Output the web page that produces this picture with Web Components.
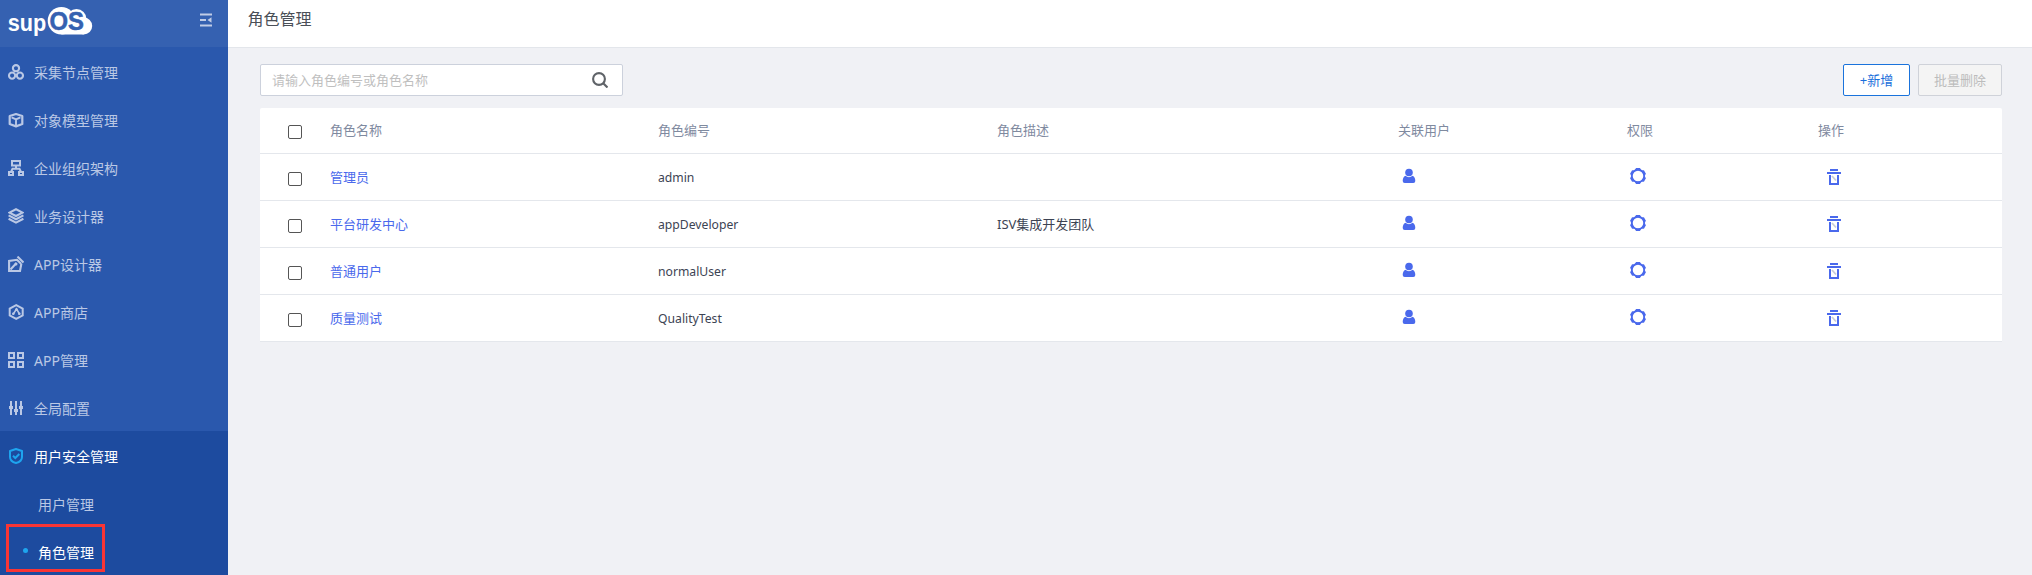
<!DOCTYPE html>
<html lang="zh-CN">
<head>
<meta charset="utf-8">
<title>supOS - 角色管理</title>
<style>
  html, body { margin: 0; height: 100%; overflow: hidden; }
  body { font-family: "Noto Sans", "Noto Sans CJK SC", sans-serif; font-weight: 400; background: #f0f1f5; }
</style>
</head>
<body>
<role-app></role-app>
<script>
const define = (name, html) => customElements.define(name, class extends HTMLElement {
  constructor() {
    super();
    this.attachShadow({ mode: 'open' });
  }
  connectedCallback() {
    if (this.shadowRoot.childNodes.length) return;
    const t = document.createElement('template');
    t.innerHTML = typeof html === 'function' ? html(this) : html;
    this.shadowRoot.append(t.content.cloneNode(true));
  }
});

const ICONS = {
  nodes: '<g fill="none" stroke="currentColor" stroke-width="2.100"><circle cx="8" cy="4.200" r="3.100"/><circle cx="4.100" cy="11.600" r="3.100"/><circle cx="11.900" cy="11.600" r="3.100"/></g>',
  cube: '<g fill="none" stroke="currentColor" stroke-width="2.200" stroke-linejoin="round"><path d="M8 2 14.300 4v8L8 14.400 1.700 12V4z"/><path d="M3.600 5.400 8 7.400l4.400-2M8 7.400v6" stroke-width="1.900"/></g>',
  org: '<g fill="none" stroke="currentColor" stroke-width="2"><path d="M4 1h8v4.500H4zM1 12h4v3H1zM11 12h4v3h-4zM8 6v2.500M3 12l1.500-3.200h7L13 12"/></g>',
  layers: '<g fill="none" stroke="currentColor" stroke-width="2.100"><path d="M8 1.200 14.600 4.600 8 8 1.400 4.600z"/><path d="M.6 7.400 8 11.200l7.400-3.800M.6 10.800 8 14.600l7.400-3.800"/></g>',
  design: '<g fill="none" stroke="currentColor" stroke-width="2.100"><path d="M13.400 7.500 12 15H1.100V5L9 3.800l4 4"/><path d="m9.500.6 6 6"/><path d="M2.500 13.500 8.500 7"/></g><circle cx="8" cy="8" r="1.500" fill="currentColor"/>',
  store: '<g fill="none" stroke="currentColor" stroke-width="2"><path d="M8.200 1.200 14.700 4.600v6.800L8.200 14.800 1.700 11.400V4.600z"/><path d="M5 10.500 7.200 7l1.400-2 3.200 5.500" stroke-width="1.500"/></g><g fill="currentColor"><circle cx="8.400" cy="5.600" r="1.300"/><circle cx="5.300" cy="9.800" r="1.300"/><circle cx="11.300" cy="9.800" r="1.300"/></g>',
  grid: '<path d="M1 1h5v5H1zM10 1h5v5h-5zM1 10h5v5H1zM10 10h5v5h-5z" fill="none" stroke="currentColor" stroke-width="2"/>',
  sliders: '<path d="M3 1v14M8 1v14M13 1v14" stroke="currentColor" stroke-width="2"/><path d="M1 6h4v3H1zM6 9h4v3H6zM11 6h4v3h-4z" fill="currentColor"/>',
  shield: '<path d="M8 1 14 3v6q0 4.500-6 6-6-1.500-6-6V3z" fill="none" stroke="currentColor" stroke-width="2" stroke-linejoin="round"/><path d="m5 7.800 2.300 2.200 4-4" fill="none" stroke="currentColor" stroke-width="2"/>',
  fold: '<path d="M1 1.500h12M1 7h6M1 12.500h12" stroke="currentColor" stroke-width="2"/><path d="M12.500 4.200v5.600L8.500 7z" fill="currentColor"/>',
  search: '<circle cx="7" cy="7" r="5.900" fill="none" stroke="currentColor" stroke-width="2.100"/><path d="m11 11 4.500 4.500" stroke="currentColor" stroke-width="2.200"/>',
  user: '<circle cx="8" cy="4.500" r="3.800" fill="currentColor"/><path d="M4.400 7.800Q8 10.600 11.600 7.800 14.300 9 14.300 13q0 2-2 2H3.700q-2 0-2-2 0-4 2.700-5.200z" fill="currentColor"/>',
  gear: '<circle cx="8" cy="8" r="6.200" fill="none" stroke="currentColor" stroke-width="1.900"/><g fill="currentColor"><path d="M6 0h4l1.200 2.300H4.800zM6 16h4l1.200-2.300H4.800z"/><path d="M6 0h4l1.200 2.300H4.800zM6 16h4l1.200-2.300H4.800z" transform="rotate(60 8 8)"/><path d="M6 0h4l1.200 2.300H4.800zM6 16h4l1.200-2.300H4.800z" transform="rotate(120 8 8)"/></g>',
  trash: '<path d="M4 1h8M1 4h14" stroke="currentColor" stroke-width="2"/><path d="M4 6v9h8V6" fill="none" stroke="currentColor" stroke-width="2"/><path d="m6 7 4 4.500" stroke="#c9cdd8" stroke-width="1.800"/>'
};

define('ui-icon', el => `<style>:host{display:block;width:16px;height:16px;flex:none}svg{display:block;width:100%;height:100%}</style>
  <svg viewBox="${el.getAttribute('box') || '0 0 16 16'}">${ICONS[el.getAttribute('name')]}</svg>`);

define('brand-logo', `<style>:host{display:block;width:86px;height:36px}svg{display:block}</style>
  <svg width="86" height="36" viewBox="0 0 86 36" font-family="Liberation Sans" font-weight="700">
    <g fill="#fff"><circle cx="53.400" cy="13.700" r="13.700"/><circle cx="68.500" cy="12" r="10"/><circle cx="75.700" cy="19" r="8.500"/><path d="M53.400 14h22.300v13.500H53.400z"/></g>
    <text x="-0.300" y="24" font-size="23" fill="#fff" textLength="38.500" lengthAdjust="spacingAndGlyphs">sup</text>
    <text x="41.500" y="22.800" font-size="25" fill="#3561b1" stroke="#3561b1" stroke-width=".5" textLength="34.500" lengthAdjust="spacingAndGlyphs">OS</text>
  </svg>`);

define('nav-item', `<style>
  :host{display:flex;align-items:center;height:48px;box-sizing:border-box;padding:4px 0 0 8px;gap:10px;font-size:14px;color:#bac8e5}
  :host([active]){color:#fff}
  :host([sub]){padding-left:38px}
  :host([current]){padding-left:23px}
  .dot{display:none;width:5px;height:5px;border-radius:50%;background:#1ea5ef;margin-top:-5px}
  :host([current]) .dot{display:block}
  ::slotted(ui-icon){margin-top:-2px}
  .label{line-height:20px;white-space:nowrap}
  </style><slot name="icon"></slot><i class="dot"></i><span class="label"><slot></slot></span>`);

define('side-nav', `<style>
  :host{display:flex;flex-direction:column;width:228px;flex:none;background:#2a58ad;position:relative}
  header{height:47px;background:#3561b1;display:flex;align-items:flex-start;justify-content:space-between;box-sizing:border-box;padding:7px 15px 0 8px}
  header ui-icon{color:#c0cce6;width:14px;height:14px;margin-top:6px}
  .open{background:#1d4b9f;flex:1}
  .open ui-icon{color:#1ea5ef}
  .mark{position:absolute;left:6px;top:524px;width:99px;height:48px;box-sizing:border-box;border:3px solid #f93535}
  </style>
  <header><brand-logo></brand-logo><ui-icon name="fold" box="0 0 14 14"></ui-icon></header>
  <nav>${[['nodes','采集节点管理'],['cube','对象模型管理'],['org','企业组织架构'],['layers','业务设计器'],['design','APP设计器'],['store','APP商店'],['grid','APP管理'],['sliders','全局配置']].map(([i,t]) => `<nav-item><ui-icon slot="icon" name="${i}"></ui-icon>${t}</nav-item>`).join('')}</nav>
  <nav class="open"><nav-item active><ui-icon slot="icon" name="shield"></ui-icon>用户安全管理</nav-item><nav-item sub>用户管理</nav-item><nav-item sub active current>角色管理</nav-item></nav>
  <div class="mark"></div>`);

define('page-header', `<style>:host{display:flex;height:48px;box-sizing:border-box;border-bottom:1px solid #e3e6eb;background:#fff;padding:7px 20px 0 19.500px;font-size:16px;line-height:24px;color:#4a4f57}</style><slot></slot>`);

define('search-box', `<style>
  :host{display:flex;align-items:center;justify-content:space-between;width:363px;height:32px;box-sizing:border-box;border:1px solid #ccd1dc;border-radius:2px;background:#fff;padding:0 14px 0 11px;font-size:13px;color:#bfbfbf}
  ui-icon{color:#5f6368;margin-top:-1px}
  span{line-height:20px}</style><span><slot></slot></span><ui-icon name="search"></ui-icon>`);

define('ui-button', `<style>
  :host{display:flex;align-items:center;justify-content:center;height:32px;box-sizing:border-box;border:1px solid #1a73dc;border-radius:2px;background:#fff;color:#1a6fdb;font-size:13px;line-height:20px;width:67px}
  :host([disabled]){width:84px;border-color:#cfd2d9;background:#f4f4f4;color:#bcbcbc}</style><slot></slot>`);

define('check-box', `<style>:host{display:block;width:14px;height:14px;box-sizing:border-box;border:1px solid #555;border-radius:2px;background:#fff}</style>`);

define('table-row', `<style>
  :host{display:grid;grid-template-columns:70px 328px 339px 401px 229px 191px 1fr;align-items:center;height:47px;box-sizing:border-box;border-bottom:1px solid #e4e7ec;font-size:13px;line-height:20px;color:#3c4353}
  :host([head]){height:46px;color:#7f8a9f}
  check-box{margin:3px 0 0 28px}
  .t,.h{padding-bottom:1px}
  .code{font-size:12.200px;padding:1px 0 0}
  :host([head]) .code{font-size:13px;padding:0 0 1px}
  .name{color:#4a69ec}
  :host([head]) .name{color:inherit}
  ui-icon{color:#4a69ec;margin-top:-1px}
  .u,.g{margin-left:3px}.d{margin:1px 0 0 8px}
  </style>
  <check-box></check-box><span class="t name"><slot name="name"></slot></span><span class="t code"><slot name="code"></slot></span><span class="t"><slot name="desc"></slot></span>
  <span class="h"><slot name="users"><ui-icon class="u" name="user"></ui-icon></slot></span><span class="h"><slot name="perm"><ui-icon class="g" name="gear"></ui-icon></slot></span><span class="h"><slot name="ops"><ui-icon class="d" name="trash"></ui-icon></slot></span>`);

const cells = o => Object.entries(o).map(([k, v]) => `<span slot="${k}">${v}</span>`).join('');
define('role-table', `<style>:host{display:block;background:#fff;border-radius:2px 2px 0 0}</style>
  <table-row head>${cells({name:'角色名称',code:'角色编号',desc:'角色描述',users:'关联用户',perm:'权限',ops:'操作'})}</table-row>
  ${[['管理员','admin',''],['平台研发中心','appDeveloper','ISV集成开发团队'],['普通用户','normalUser',''],['质量测试','QualityTest','']].map(([name,code,desc]) => `<table-row>${cells({name,code,desc})}</table-row>`).join('')}`);

define('role-app', `<style>
  :host{display:flex;height:575px;width:2032px}
  main{flex:1;background:#f0f1f5}
  section{padding:16px 30px 0 32px}
  .bar{display:flex;gap:8px;margin-bottom:12px}
  search-box{margin-right:auto}
  </style><side-nav></side-nav><main><page-header>角色管理</page-header><section><div class="bar"><search-box>请输入角色编号或角色名称</search-box><ui-button>+新增</ui-button><ui-button disabled>批量删除</ui-button></div><role-table></role-table></section></main>`);
</script>
</body>
</html>
